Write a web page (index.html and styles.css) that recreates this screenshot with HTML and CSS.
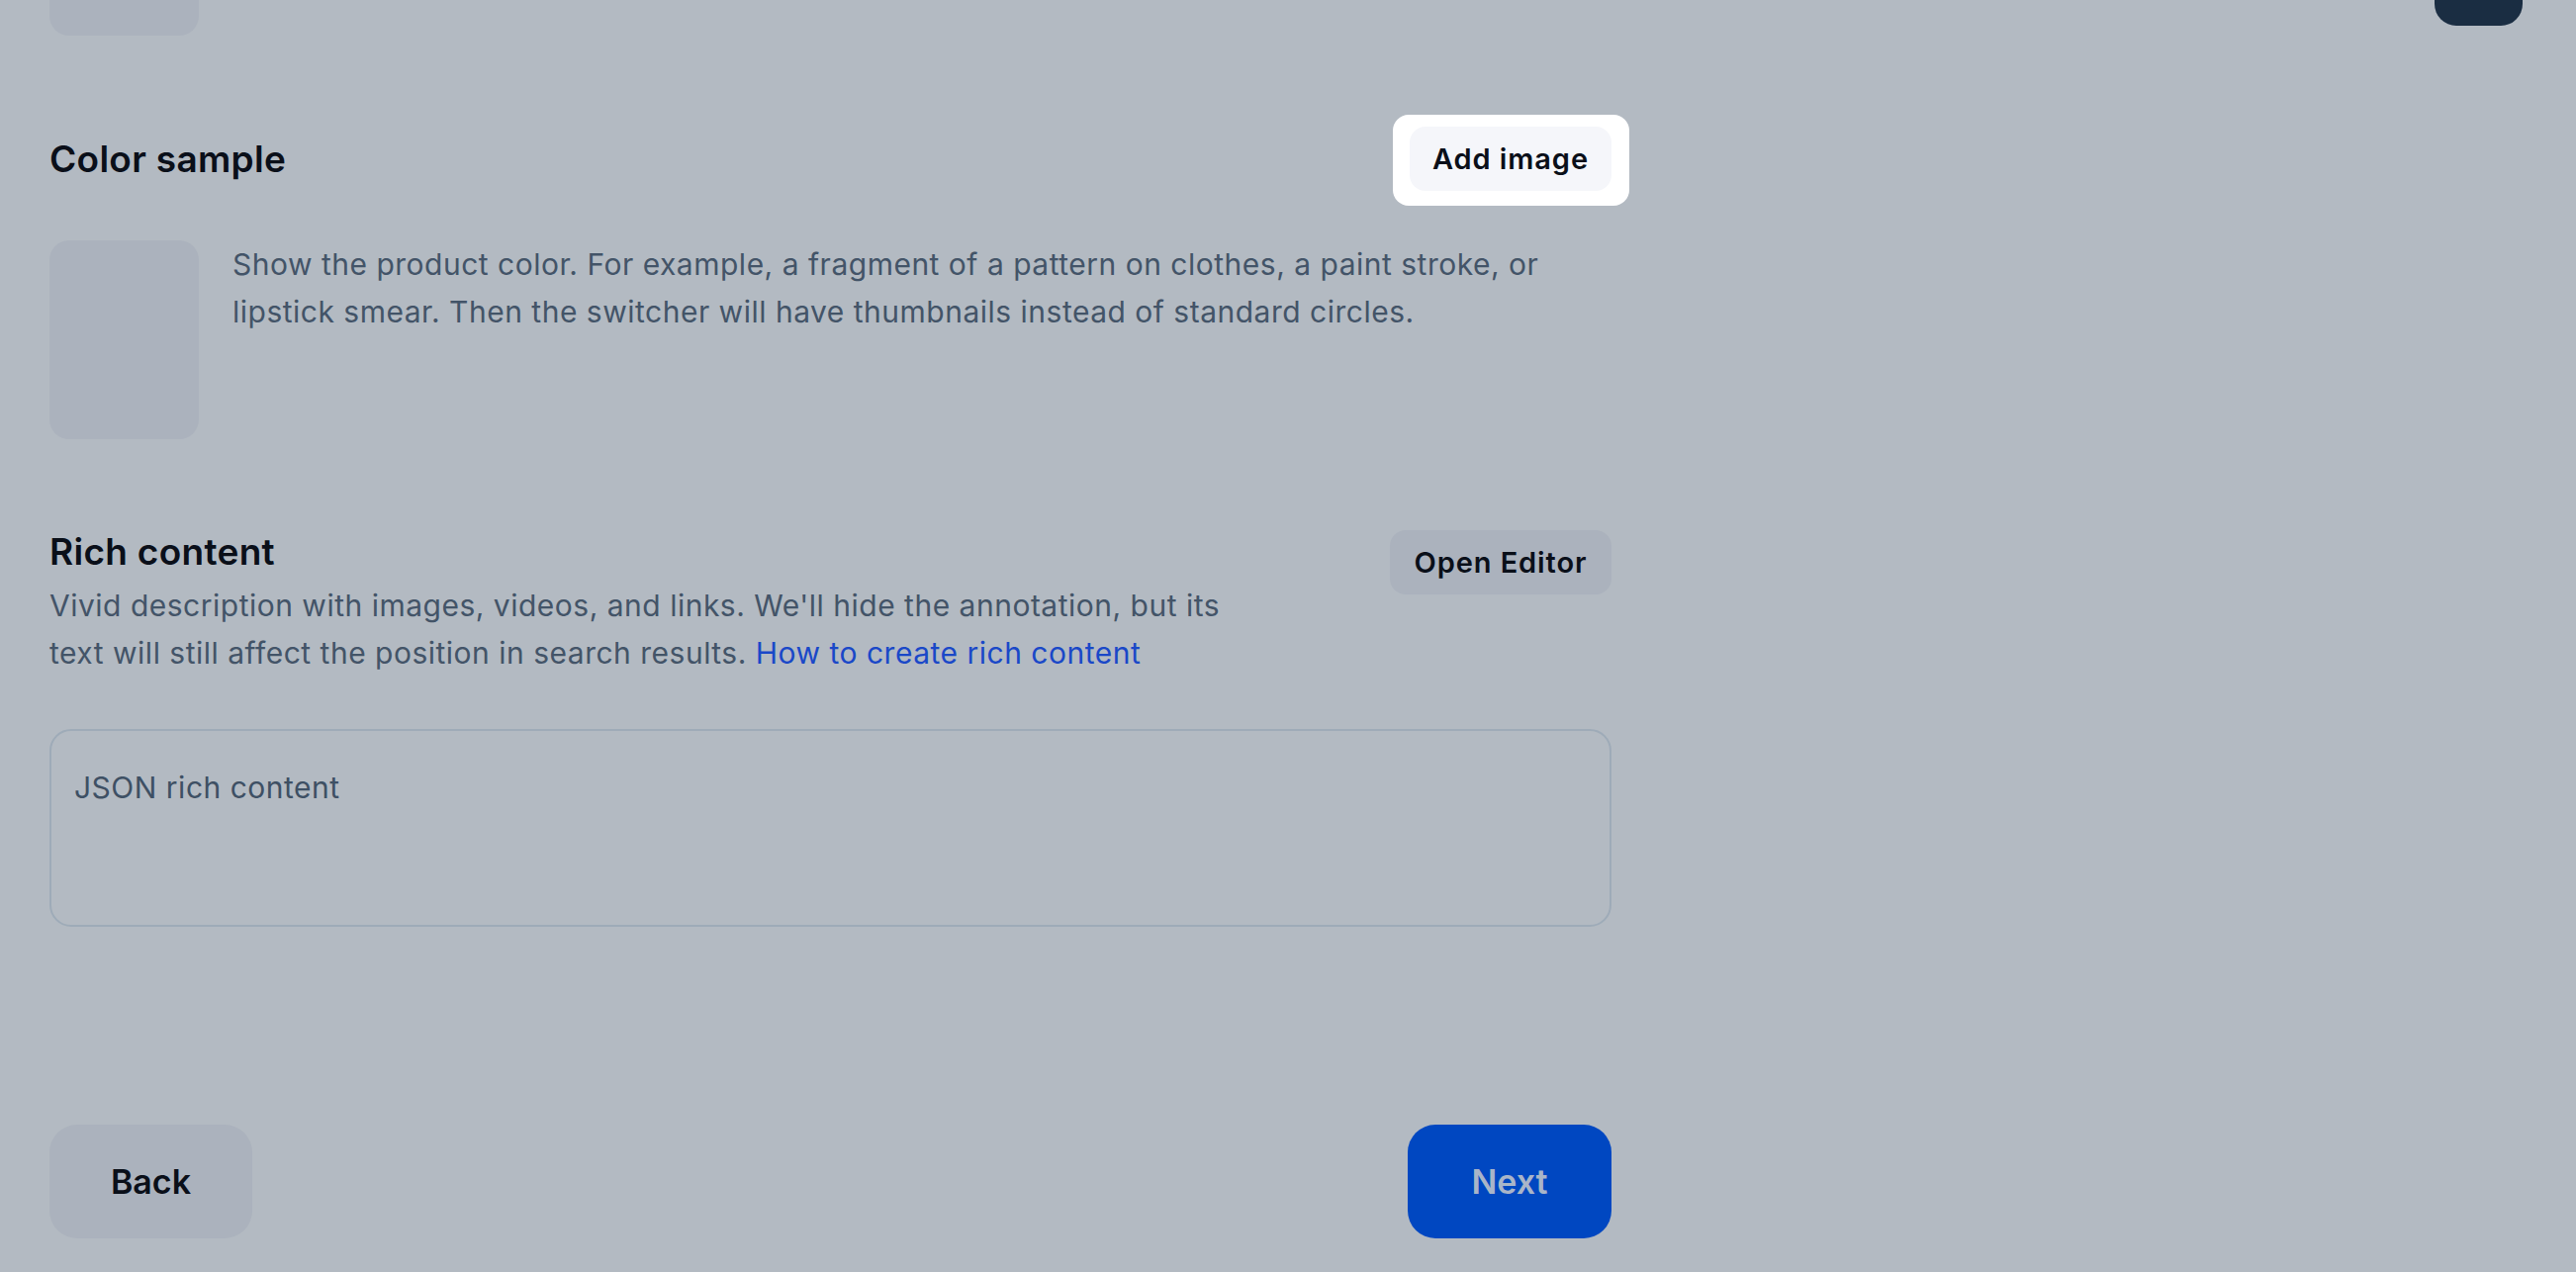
FILE: index.html
```html
<!DOCTYPE html>
<html>
<head>
    <link rel="stylesheet" href="styles.css">
</head>
<body>
    <div class="page">
        <!-- scrolled-off pieces of the previous block -->
        <div class="top-strip">
            <div class="stub-thumb"></div>
            <div class="stub-btn"></div>
        </div>

        <div class="main">
            <section class="color-sample">
                <div class="section-head">
                    <h2 class="title">Color sample</h2>
                    <div class="spotlight">
                        <button class="btn btn-light">Add image</button>
                    </div>
                </div>
                <div class="sample-row">
                    <div class="swatch"></div>
                    <p class="hint">Show the product color. For example, a fragment of a pattern on clothes, a paint stroke, or lipstick smear. Then the switcher will have thumbnails instead of standard circles.</p>
                </div>
            </section>

            <section class="rich">
                <div class="section-head top">
                    <div class="rich-text">
                        <h2 class="title">Rich content</h2>
                        <p class="hint narrow">Vivid description with images, videos, and links. We'll hide the annotation, but its text will still affect the position in search results. <a href="#" class="link">How to create rich content</a></p>
                    </div>
                    <button class="btn btn-gray">Open Editor</button>
                </div>
                <textarea class="json-field" placeholder="JSON rich content"></textarea>
            </section>

            <div class="footer">
                <button class="btn-big back">Back</button>
                <button class="btn-big next">Next</button>
            </div>
        </div>
    </div>
</body>
</html>
```

FILE: styles.css
```css
body {
    margin: 0;
    background-color: #b3bac2;
    font-family: Inter, "Noto Sans", sans-serif;
    color: #0a0f19;
    overflow: hidden;
}
.page {
    padding: 0 54px 0 50px;
}
.top-strip {
    display: flex;
    justify-content: space-between;
    align-items: flex-start;
    height: 36px;
}
.stub-thumb {
    width: 151px;
    height: 200px;
    margin-top: -164px;
    border-radius: 20px;
    background-color: #abb2bd;
}
.stub-btn {
    width: 89px;
    height: 90px;
    margin-top: -64px;
    border-radius: 22px;
    background-color: #1a2d42;
}
.main {
    width: 1579px;
}
.color-sample {
    margin-top: 92px;
}
.section-head {
    display: flex;
    justify-content: space-between;
    align-items: center;
}
.section-head.top {
    align-items: flex-start;
}
.title {
    margin: 0;
    font-size: 37px;
    line-height: 44px;
    font-weight: 600;
    letter-spacing: 0.3px;
}
.spotlight {
    background-color: #fff;
    border-radius: 16px;
    padding: 12px 18px 15px 17px;
    margin: -12px -18px -15px -17px;
}
.btn {
    height: 65px;
    padding: 0;
    border: none;
    border-radius: 16px;
    font-family: inherit;
    font-size: 29px;
    font-weight: 600;
    letter-spacing: 0.9px;
    color: #0a0f19;
    cursor: pointer;
}
.btn-light {
    width: 204px;
    background-color: #f5f6fa;
}
.btn-gray {
    width: 224px;
    background-color: #abb2bd;
}
.sample-row {
    display: flex;
    align-items: flex-start;
    gap: 34px;
    margin-top: 50px;
}
.swatch {
    flex: none;
    width: 151px;
    height: 201px;
    border-radius: 20px;
    background-color: #abb2bd;
}
.hint {
    margin: 0;
    font-size: 30px;
    line-height: 48px;
    color: #435468;
    letter-spacing: 0.5px;
}
.hint.narrow {
    margin-top: 8px;
    max-width: 1205px;
}
.link {
    color: #1a48c8;
    text-decoration: none;
}
.rich {
    margin-top: 92px;
}
.json-field {
    display: block;
    box-sizing: border-box;
    width: 100%;
    height: 200px;
    margin-top: 53px;
    padding: 33px 23px;
    border: 2px solid #9eabb8;
    border-radius: 22px;
    background: transparent;
    font-family: inherit;
    font-size: 30px;
    line-height: 48px;
    letter-spacing: 0.5px;
    color: #0a0f19;
    resize: none;
    outline: none;
}
.json-field::placeholder {
    color: #3e5064;
}
.footer {
    display: flex;
    justify-content: space-between;
    margin-top: 200px;
}
.btn-big {
    width: 205px;
    height: 115px;
    border: none;
    border-radius: 28px;
    font-family: inherit;
    font-size: 34px;
    font-weight: 600;
    cursor: pointer;
}
.back {
    background-color: #abb2bd;
    color: #0a0f19;
}
.next {
    width: 206px;
    background-color: #0047c1;
    color: #a9b5c8;
}
```
